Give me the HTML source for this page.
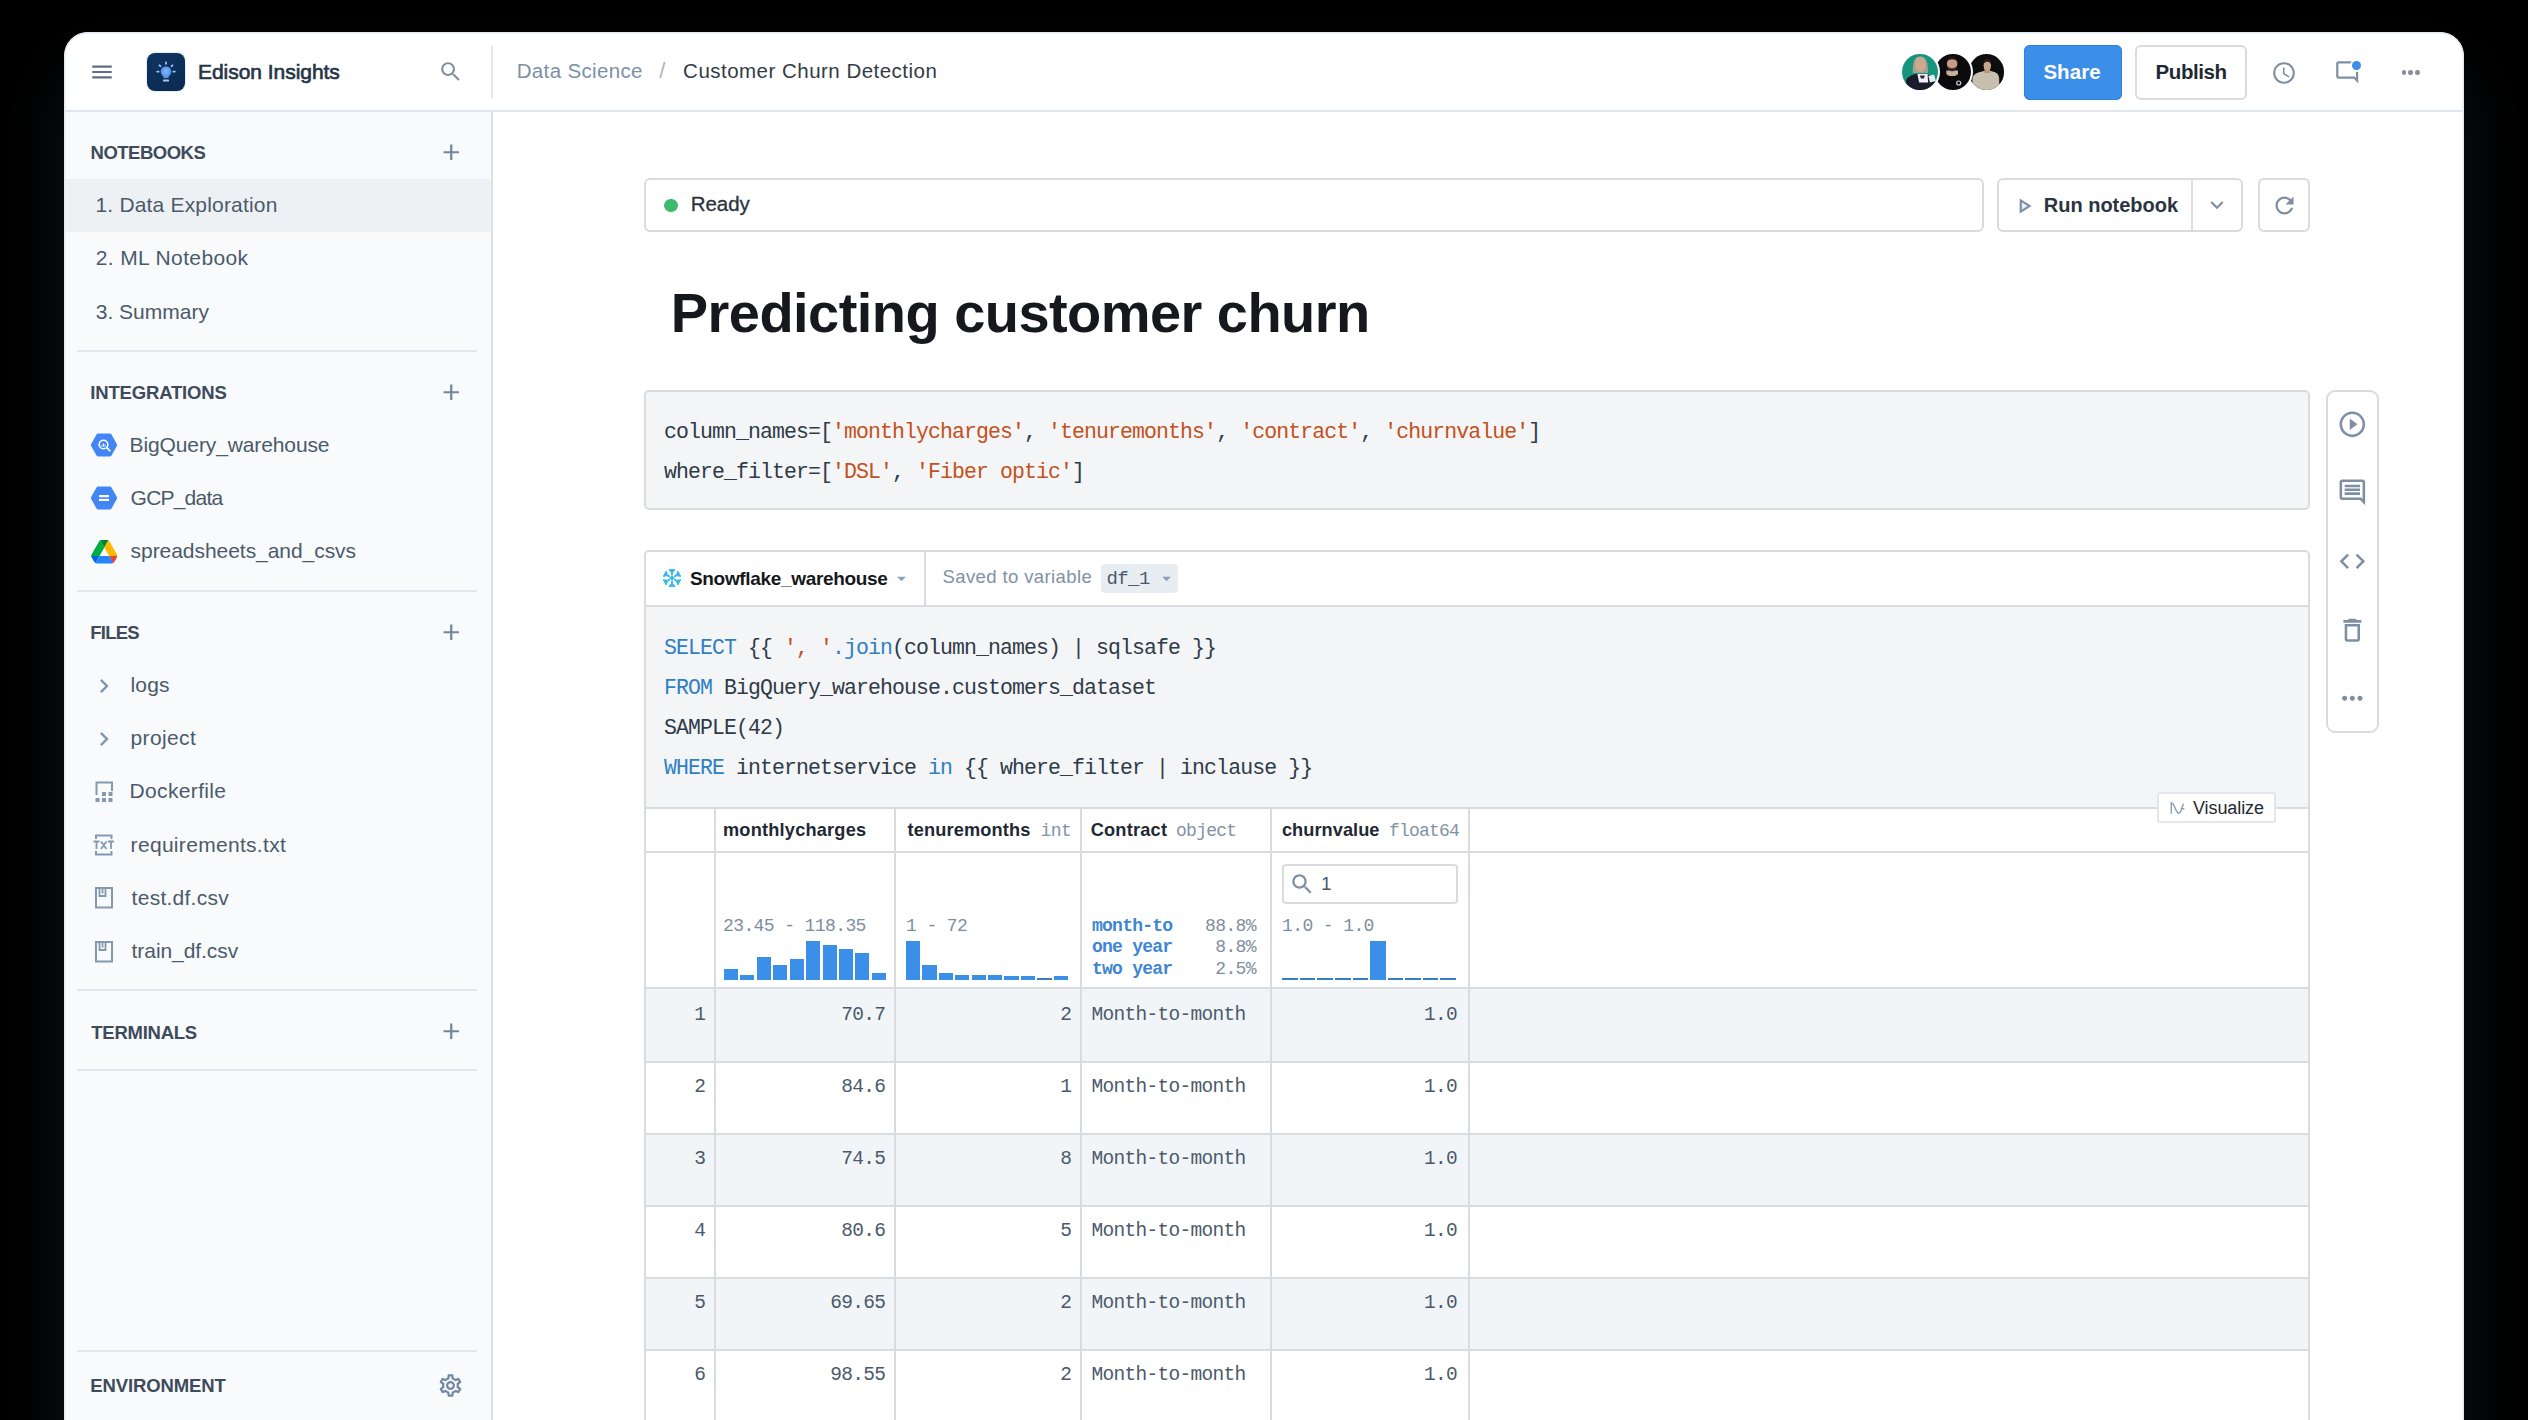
<!DOCTYPE html>
<html>
<head>
<meta charset="utf-8">
<style>
*{box-sizing:border-box;margin:0;padding:0}
html,body{width:2528px;height:1420px;overflow:hidden;background:#000;font-family:"Liberation Sans",sans-serif;}
body{position:relative;background:#000;}
.abs{position:absolute}
#win{position:absolute;left:64px;top:32px;width:2400px;height:1420px;background:#fff;border-radius:24px 24px 0 0;overflow:hidden;box-shadow:0 40px 70px 0px rgba(15,18,22,.95);}
/* everything inside #win positioned in page coords minus (64,32) via wrapper */
#pg{position:absolute;left:-64px;top:-32px;width:2528px;height:1452px;}
.t{position:absolute;white-space:nowrap;line-height:1;}
.hl{position:absolute;height:2px;background:#e3e7ec}
.vl{position:absolute;width:2px;background:#e3e7ec}
/* sidebar */
#side{position:absolute;left:64px;top:112px;width:428px;height:1340px;background:#f8fafc;}
.sh{font-size:18.5px;font-weight:bold;color:#3d4b5c;letter-spacing:.2px}
.si{font-size:21px;color:#4b5a6b;letter-spacing:.3px}
.plus{position:absolute;width:16px;height:16px}
.plus:before{content:"";position:absolute;left:7px;top:0;width:2px;height:16px;background:#6b83a0}
.plus:after{content:"";position:absolute;left:0;top:7px;width:16px;height:2px;background:#6b83a0}
.mono{font-family:"Liberation Mono",monospace}
.box{position:absolute;border:2px solid #d9dbdf;border-radius:6px;background:#fff}
.code{font-family:"Liberation Mono",monospace;font-size:21.5px;letter-spacing:-.9px;color:#2f3b48;position:absolute;white-space:pre;line-height:1}
.or{color:#c4501b}
.bl{color:#2f7fc4}
.cell{position:absolute;font-family:"Liberation Mono",monospace;font-size:19.5px;letter-spacing:-.7px;color:#4b5a6b;white-space:nowrap;line-height:1}
.th{position:absolute;font-size:19px;font-weight:bold;color:#1f2933;white-space:nowrap;line-height:1}
.ty{font-family:"Liberation Mono",monospace;font-weight:normal;-webkit-text-stroke:0;color:#8293a5;font-size:18px;letter-spacing:-.6px}
.bar{position:absolute;background:#3b8fe8}
</style>
</head>
<body>
<div id="win"><div id="pg">
<div class="abs" style="left:64px;top:32px;width:2400px;height:1420px;border-radius:24px 24px 0 0;box-shadow:0 0 0 1.500px #e4eaf2 inset;z-index:50;pointer-events:none"></div>

<!-- HEADER -->
<div class="hl" style="left:64px;top:110px;width:2400px;background:#e1e6ec"></div>
<div class="vl" style="left:491px;top:46px;height:52px;background:#e3e6ea"></div>
<!-- hamburger -->
<svg class="abs" style="left:88.80px;top:58.90px" width="26" height="26" viewBox="0 0 24 24"><path d="M3 18h18v-2H3v2zm0-5h18v-2H3v2zm0-7v2h18V6H3z" fill="#5f6d7e"/></svg>
<!-- logo -->
<div class="abs" id="logo" style="left:147px;top:53px;width:38px;height:38px;border-radius:8px;background:linear-gradient(160deg,#103562,#0a2a50);box-shadow:0 0 0 1px rgba(205,220,238,.55)">
<svg width="38" height="38" viewBox="0 0 38 38" style="position:absolute;left:0;top:0">
<path d="M19 13.600c-3.100 0-5.300 2.300-5.300 5 0 1.900 1 3.200 2.100 4.300.5.500.8 1 .8 1.600v.4h4.800v-.4c0-.6.300-1.100.8-1.600 1.100-1.100 2.100-2.400 2.100-4.300 0-2.700-2.200-5-5.300-5z" fill="#5c97ee"/>
<ellipse cx="19" cy="18.500" rx="2.800" ry="3.300" fill="#79abf8"/>
<rect x="16" y="26.600" width="6" height="1.900" rx=".6" fill="#a5c6fa"/>
<g stroke="#9dc1fa" stroke-width="1.900" stroke-linecap="round"><path d="M19 9.400v1.300M12.500 12.300l.9.900M25.500 12.300l-.9.900M10.200 18.600h1.400M26.400 18.600h1.400"/></g>
</svg></div>
<div class="t" id="brand" style="left:198.0px;top:61.2px;letter-spacing:-0.04px;font-size:21px;font-weight:normal;-webkit-text-stroke:.65px #263445;color:#263445">Edison Insights</div>
<!-- search -->
<svg class="abs" style="left:437.72px;top:58.82px" width="25.5" height="25.5" viewBox="0 0 24 24"><path d="M15.5 14h-.79l-.28-.27C15.41 12.59 16 11.11 16 9.5 16 5.91 13.09 3 9.5 3S3 5.910 3 9.5 5.910 16 9.5 16c1.610 0 3.090-.59 4.230-1.570l.27.28v.79l5 4.990L20.490 19l-4.990-5zm-6 0C7.010 14 5 11.990 5 9.5S7.010 5 9.5 5 14 7.010 14 9.5 11.990 14 9.5 14z" fill="#7f8fa3"/></svg>
<!-- breadcrumb -->
<div class="t" id="bc1" style="left:516.7px;top:60.8px;letter-spacing:0.35px;font-size:20.5px;color:#7c90a6">Data Science</div>
<div class="t" style="left:659.300px;top:59.500px;font-size:22px;color:#a9b6c4">/</div>
<div class="t" id="bc2" style="left:683.1px;top:60.8px;letter-spacing:0.48px;font-size:20.5px;color:#333b45">Customer Churn Detection</div>


<!-- avatars -->
<div class="abs" style="left:1968.6px;top:54.0px;width:35.8px;height:35.8px;border-radius:50%;background:#0d0d10;overflow:hidden;"><svg width="36" height="36" viewBox="1968.6 54.0 36 36" style="position:absolute;left:0;top:0"><path d="M1972 92V80c0-5 4-7.500 9-8.200l2.200-.9h7.400l2.200.9c4 .7 6 3.200 6 8.200v12z" fill="#c9bfae"/><rect x="1984" y="68" width="5.600" height="5" fill="#b8917a"/><ellipse cx="1986.900" cy="65.600" rx="3.700" ry="5.300" fill="#c9a48c"/><path d="M1983 64.500c0-4 1.500-5.800 3.900-5.800s3.900 1.800 3.900 5.800c-1-2-2-2.800-3.900-2.800s-2.900.8-3.900 2.800z" fill="#2a1d17"/></svg></div>
<div class="abs" style="left:1935.1px;top:54.0px;width:35.8px;height:35.8px;border-radius:50%;background:#0b0b0d;overflow:hidden;box-shadow:0 0 0 2px #fff;"><svg width="36" height="36" viewBox="1935.1 54.0 36 36" style="position:absolute;left:0;top:0"><path d="M1946.500 70.500h11.600v3c0 1.500-2.600 2.600-5.800 2.600s-5.800-1.100-5.800-2.600z" fill="#c7b29d"/><ellipse cx="1952.200" cy="63.800" rx="5.300" ry="6.900" fill="#c99a85"/><path d="M1947 65c.5 4 2.500 6.300 5.200 6.300s4.700-2.300 5.200-6.300c-1 2.300-3 3.200-5.200 3.200s-4.200-.9-5.200-3.200z" fill="#3b2a23"/><path d="M1946.600 62.500c0-4.200 2.400-6.500 5.600-6.500s5.600 2.300 5.600 6.500c-1.200-2.300-3-3.300-5.600-3.300s-4.400 1-5.600 3.300z" fill="#1d1512"/><circle cx="1958.800" cy="83" r="2" fill="none" stroke="#cfcfcf" stroke-width="1.200"/></svg></div>
<div class="abs" style="left:1902.1px;top:54.0px;width:35.8px;height:35.8px;border-radius:50%;background:#17947c;overflow:hidden;box-shadow:0 0 0 2px #fff;"><svg width="36" height="36" viewBox="1902.1 54.0 36 36" style="position:absolute;left:0;top:0"><path d="M1912.800 73c0-9 .5-16.500 7.600-16.500s7.600 7.500 7.600 16.500z" fill="#a9a08c"/><ellipse cx="1920.400" cy="65" rx="5.200" ry="7.200" fill="#cfa88f"/><path d="M1915.500 62c.4-3.600 2.200-5.200 4.900-5.200s4.500 1.600 4.900 5.200c-1.500-1.900-3-2.500-4.900-2.500s-3.400.6-4.900 2.500z" fill="#b5ad9a"/><path d="M1906 92V82c0-4.500 5-7 10-8h9c5 1 10 3.500 10 8v10z" fill="#1b1b2b"/><path d="M1917.500 74h10.200l.5 8.500h-9z" fill="#eef0f6"/><path d="M1928.500 76l5.500-1.500 2 6.500-6 1.500z" fill="#e4edf0"/><path d="M1920 75.500h5l-1 3h-3z" fill="#2a2540"/></svg></div>
<!-- share / publish -->
<div class="abs" style="left:2024px;top:45px;width:98px;height:55px;border-radius:6px;background:#3b8fe8;box-shadow:0 0 0 1px #2f82dc inset"></div>
<div class="t" id="share" style="left:2043.4px;top:61.5px;letter-spacing:0.05px;font-size:20.5px;font-weight:bold;color:#fff">Share</div>
<div class="box" style="left:2135px;top:45px;width:112px;height:55px;border-radius:6px"></div>
<div class="t" id="publish" style="left:2155.5px;top:61.5px;letter-spacing:-0.40px;font-size:20.5px;font-weight:bold;color:#1f2933">Publish</div>
<!-- clock -->
<svg class="abs" style="left:2271.00px;top:59.60px" width="26" height="26" viewBox="0 0 24 24"><path d="M11.990 2C6.470 2 2 6.480 2 12s4.470 10 9.990 10C17.520 22 22 17.520 22 12S17.520 2 11.990 2zM12 20c-4.420 0-8-3.580-8-8s3.580-8 8-8 8 3.580 8 8-3.580 8-8 8zm.5-13H11v6l5.250 3.150.75-1.230-4.500-2.670z" fill="#7f8fa3"/></svg>
<!-- comment w/ dot -->
<svg class="abs" style="left:2334.10px;top:59.00px" width="26.4" height="26.4" viewBox="0 0 24 24"><path d="M20 17.170L18.830 16H4V4h16v13.170zM20 2H4c-1.100 0-2 .9-2 2v12c0 1.100.9 2 2 2h14l4 4V4c0-1.100-.9-2-2-2z" fill="#7f8fa3"/></svg>
<div class="abs" style="left:2350px;top:58.800px;width:13px;height:13px;border-radius:50%;background:#fff"></div><div class="abs" style="left:2351.800px;top:60.600px;width:9.400px;height:9.400px;border-radius:50%;background:#3b8fe8"></div>
<!-- dots -->
<div class="abs" style="left:2401.600px;top:70.300px;width:4.600px;height:4.600px;border-radius:50%;background:#868f9b"></div>
<div class="abs" style="left:2408.300px;top:70.300px;width:4.600px;height:4.600px;border-radius:50%;background:#868f9b"></div>
<div class="abs" style="left:2415px;top:70.300px;width:4.600px;height:4.600px;border-radius:50%;background:#868f9b"></div>

<!-- SIDEBAR -->
<div id="side"></div>
<div class="vl" style="left:491px;top:112px;height:1340px;background:#dcdfe4"></div>

<div class="t sh" id="sh1" style="left:90.6px;top:143.6px;letter-spacing:-0.51px;">NOTEBOOKS</div><svg class="abs" style="left:437.55px;top:138.85px" width="26.5" height="26.5" viewBox="0 0 24 24"><path d="M19 13h-6v6h-2v-6H5v-2h6V5h2v6h6v2z" fill="#6f86a1"/></svg>
<div class="abs" style="left:64px;top:179px;width:427px;height:53px;background:#eef1f4"></div>
<div class="t si" id="nb1" style="left:95.5px;top:194.3px;letter-spacing:0.18px;">1. Data Exploration</div>
<div class="t si" id="nb2" style="left:95.7px;top:247.2px;letter-spacing:0.38px;">2. ML Notebook</div>
<div class="t si" id="nb3" style="left:95.7px;top:300.5px;letter-spacing:0.02px;">3. Summary</div>
<div class="hl" style="left:77px;top:350px;width:400px"></div>

<div class="t sh" id="sh2" style="left:90.3px;top:383.8px;letter-spacing:-0.17px;">INTEGRATIONS</div><svg class="abs" style="left:437.55px;top:378.85px" width="26.5" height="26.5" viewBox="0 0 24 24"><path d="M19 13h-6v6h-2v-6H5v-2h6V5h2v6h6v2z" fill="#6f86a1"/></svg>
<svg class="abs" style="left:90px;top:432px" width="28" height="26" viewBox="0 0 28 26"><path d="M8.200 1.500h11.600a2 2 0 0 1 1.700 1l5.300 9.500a2 2 0 0 1 0 2l-5.300 9.500a2 2 0 0 1-1.700 1H8.200a2 2 0 0 1-1.700-1L1.200 14a2 2 0 0 1 0-2l5.300-9.500a2 2 0 0 1 1.700-1z" fill="#4285f4"/><circle cx="13.500" cy="12.500" r="4.300" fill="none" stroke="#fff" stroke-width="1.600"/><path d="M16.700 15.700l3 3" stroke="#fff" stroke-width="1.800" stroke-linecap="round"/><path d="M12 13v1.500M13.500 11.500v3M15 12.500v2" stroke="#fff" stroke-width="1"/></svg>
<div class="t si" id="in1" style="left:129.6px;top:433.6px;letter-spacing:-0.12px;">BigQuery_warehouse</div>
<svg class="abs" style="left:90px;top:485px" width="28" height="26" viewBox="0 0 28 26"><path d="M8.200 1.500h11.600a2 2 0 0 1 1.700 1l5.300 9.500a2 2 0 0 1 0 2l-5.300 9.500a2 2 0 0 1-1.700 1H8.200a2 2 0 0 1-1.700-1L1.200 14a2 2 0 0 1 0-2l5.300-9.500a2 2 0 0 1 1.700-1z" fill="#4285f4"/><rect x="9" y="10" width="10" height="2.200" fill="#fff"/><rect x="9" y="13.800" width="10" height="2.200" fill="#fff"/></svg>
<div class="t si" id="in2" style="left:130.6px;top:486.8px;letter-spacing:-0.79px;">GCP_data</div>
<svg class="abs" style="left:90.600px;top:540.200px" width="26.600" height="23.400" viewBox="0 0 87.300 78"><path d="M6.600 66.850l3.850 6.650c.8 1.400 1.950 2.500 3.300 3.300l13.750-23.800H0c0 1.550.4 3.100 1.200 4.500z" fill="#0066da"/><path d="M43.650 25L29.900 1.200c-1.350.8-2.500 1.900-3.300 3.300l-25.400 44A9.060 9.060 0 0 0 0 53h27.500z" fill="#00ac47"/><path d="M73.550 76.800c1.350-.8 2.500-1.900 3.300-3.300l1.600-2.750 7.650-13.250c.8-1.400 1.200-2.950 1.200-4.500H59.798l5.852 11.500z" fill="#ea4335"/><path d="M43.650 25L57.400 1.200C56.050.4 54.500 0 52.900 0H34.400c-1.600 0-3.150.45-4.500 1.200z" fill="#00832d"/><path d="M59.800 53H27.500L13.750 76.800c1.350.8 2.900 1.200 4.500 1.200h50.800c1.600 0 3.150-.45 4.500-1.200z" fill="#2684fc"/><path d="M73.400 26.500l-12.700-22c-.8-1.400-1.950-2.500-3.300-3.300L43.650 25 59.800 53h27.450c0-1.550-.4-3.100-1.200-4.500z" fill="#ffba00"/></svg>
<div class="t si" id="in3" style="left:130.6px;top:540.0px;letter-spacing:-0.05px;">spreadsheets_and_csvs</div>
<div class="hl" style="left:77px;top:590px;width:400px"></div>

<div class="t sh" id="sh3" style="left:90.3px;top:623.7px;letter-spacing:-0.78px;">FILES</div><svg class="abs" style="left:437.55px;top:618.85px" width="26.5" height="26.5" viewBox="0 0 24 24"><path d="M19 13h-6v6h-2v-6H5v-2h6V5h2v6h6v2z" fill="#6f86a1"/></svg>
<svg class="abs" style="left:89.95px;top:671.50px" width="28" height="28" viewBox="0 0 24 24"><path d="M10 6L8.590 7.410 13.170 12l-4.580 4.590L10 18l6-6z" fill="#8096ad"/></svg>
<div class="t si" id="f1" style="left:130.6px;top:674.0px;letter-spacing:0.10px;">logs</div>
<svg class="abs" style="left:89.95px;top:724.60px" width="28" height="28" viewBox="0 0 24 24"><path d="M10 6L8.590 7.410 13.170 12l-4.580 4.590L10 18l6-6z" fill="#8096ad"/></svg>
<div class="t si" id="f2" style="left:130.6px;top:727.0px;letter-spacing:0.35px;">project</div>
<svg class="abs" style="left:93px;top:779px" width="24" height="26" viewBox="0 0 24 26"><path d="M3.500 16V3.500h15.500V12" fill="none" stroke="#8499b0" stroke-width="2"/><rect x="2.500" y="19" width="4" height="4" fill="#8499b0"/><rect x="9" y="19" width="4" height="4" fill="#8499b0"/><rect x="15.500" y="19" width="4" height="4" fill="#8499b0"/><rect x="9" y="13" width="4" height="4" fill="#8499b0"/><rect x="15.500" y="13" width="4" height="4" fill="#8499b0"/></svg>
<div class="t si" id="f3" style="left:129.6px;top:780.3px;letter-spacing:0.34px;">Dockerfile</div>
<svg class="abs" style="left:92.200px;top:832px" width="26" height="26" viewBox="0 0 26 26"><path d="M4 7V3.500h15.500V7M4 19v3.500h15.500V19" fill="none" stroke="#8499b0" stroke-width="2"/><path d="M1.500 9.500h6M4.500 9.500v7.500M9 9.500l5.500 7.500M14.500 9.500L9 17M16 9.500h6M19 9.500v7.500" fill="none" stroke="#8499b0" stroke-width="1.800"/></svg>
<div class="t si" id="f4" style="left:130.6px;top:833.6px;letter-spacing:0.31px;">requirements.txt</div>
<svg class="abs" style="left:93px;top:885px" width="24" height="26" viewBox="0 0 24 26"><rect x="3" y="3" width="16" height="19.500" fill="none" stroke="#8499b0" stroke-width="2"/><path d="M6.500 3.500v7.500h6V3.500M9.500 3.500v5" fill="none" stroke="#8499b0" stroke-width="1.800"/></svg>
<div class="t si" id="f5" style="left:131.6px;top:886.8px;letter-spacing:0.26px;">test.df.csv</div>
<svg class="abs" style="left:93px;top:938.500px" width="24" height="26" viewBox="0 0 24 26"><rect x="3" y="3" width="16" height="19.500" fill="none" stroke="#8499b0" stroke-width="2"/><path d="M6.500 3.500v7.500h6V3.500M9.500 3.500v5" fill="none" stroke="#8499b0" stroke-width="1.800"/></svg>
<div class="t si" id="f6" style="left:131.6px;top:940.0px;letter-spacing:-0.07px;">train_df.csv</div>
<div class="hl" style="left:77px;top:989px;width:400px"></div>

<div class="t sh" id="sh4" style="left:91.3px;top:1023.7px;letter-spacing:-0.25px;">TERMINALS</div><svg class="abs" style="left:437.55px;top:1017.85px" width="26.5" height="26.5" viewBox="0 0 24 24"><path d="M19 13h-6v6h-2v-6H5v-2h6V5h2v6h6v2z" fill="#6f86a1"/></svg>
<div class="hl" style="left:77px;top:1069px;width:400px"></div>
<div class="hl" style="left:77px;top:1350px;width:400px"></div>
<div class="t sh" id="sh5" style="left:90.3px;top:1377.4px;letter-spacing:-0.13px;">ENVIRONMENT</div>
<svg class="abs" style="left:437.20px;top:1371.80px" width="27" height="27" viewBox="0 0 24 24"><path d="M19.430 12.980c.04-.32.07-.64.07-.98 0-.34-.03-.66-.07-.98l2.110-1.650c.19-.15.24-.42.12-.64l-2-3.460c-.09-.16-.26-.25-.44-.25-.06 0-.12.010-.17.030l-2.490 1c-.52-.4-1.080-.73-1.690-.98l-.38-2.650C14.460 2.180 14.250 2 14 2h-4c-.25 0-.46.18-.49.42l-.38 2.650c-.61.25-1.170.59-1.690.98l-2.490-1c-.06-.02-.12-.03-.18-.03-.17 0-.34.09-.43.25l-2 3.460c-.13.22-.07.49.12.64l2.110 1.650c-.04.32-.07.65-.07.98 0 .33.03.66.07.98l-2.110 1.650c-.19.15-.24.42-.12.64l2 3.460c.09.16.26.25.44.25.06 0 .12-.010.17-.03l2.490-1c.52.4 1.080.73 1.690.98l.38 2.650c.03.24.24.42.49.42h4c.25 0 .46-.18.49-.42l.38-2.650c.61-.25 1.170-.59 1.690-.98l2.490 1c.06.02.12.03.18.03.17 0 .34-.09.43-.25l2-3.460c.12-.22.07-.49-.12-.64l-2.110-1.650zm-1.980-1.710c.04.31.05.52.05.73 0 .21-.02.43-.05.73l-.14 1.130.89.7 1.080.84-.7 1.210-1.270-.51-1.040-.42-.9.68c-.43.32-.84.56-1.250.73l-1.060.43-.16 1.130-.2 1.350h-1.400l-.19-1.350-.16-1.130-1.060-.43c-.43-.18-.83-.41-1.230-.71l-.91-.7-1.060.43-1.270.51-.7-1.210 1.080-.84.89-.7-.14-1.130c-.03-.31-.05-.54-.05-.74s.02-.43.05-.73l.14-1.130-.89-.7-1.080-.84.7-1.210 1.270.51 1.040.42.9-.68c.43-.32.84-.56 1.250-.73l1.060-.43.16-1.130.2-1.350h1.390l.19 1.350.16 1.130 1.060.43c.43.18.83.41 1.230.71l.91.7 1.060-.43 1.270-.51.7 1.210-1.070.85-.89.7.14 1.130zM12 8c-2.210 0-4 1.790-4 4s1.790 4 4 4 4-1.790 4-4-1.790-4-4-4zm0 6c-1.100 0-2-.9-2-2s.9-2 2-2 2 .9 2 2-.9 2-2 2z" fill="#7389a3"/></svg>



<!-- status bar -->
<div class="box" style="left:644px;top:178px;width:1340px;height:54px"></div>
<div class="abs" style="left:664px;top:198.700px;width:13.500px;height:13.500px;border-radius:50%;background:#3dbb6d"></div>
<div class="t" id="ready" style="left:690.7px;top:194.2px;letter-spacing:-0.05px;font-size:20.5px;color:#2b3440;-webkit-text-stroke:.3px #2b3440">Ready</div>
<div class="box" style="left:1997px;top:178px;width:246px;height:54px"></div>
<div class="vl" style="left:2190.5px;top:180px;height:50px;background:#dce0e5"></div>
<svg class="abs" style="left:2010.88px;top:193.00px" width="26" height="26" viewBox="0 0 24 24"><path d="M9 6.800v10.400l8.200-5.200z" fill="#e4f3fb"/><path d="M10 8.640L15.270 12 10 15.360V8.640M8 5v14l11-7L8 5z" fill="#7f8fa3"/></svg>
<div class="t" id="runnb" style="left:2043.8px;top:194.5px;letter-spacing:-0.01px;font-size:20px;font-weight:bold;color:#2b3440">Run notebook</div>
<svg class="abs" style="left:2204.30px;top:192.48px" width="26" height="26" viewBox="0 0 24 24"><path d="M16.590 8.590L12 13.170 7.410 8.590 6 10l6 6 6-6z" fill="#7f8fa3"/></svg>
<div class="box" style="left:2258px;top:178px;width:52px;height:54px"></div>
<svg class="abs" style="left:2270.50px;top:192.00px" width="27" height="27" viewBox="0 0 24 24"><path d="M17.650 6.350C16.200 4.900 14.210 4 12 4c-4.420 0-7.990 3.580-7.990 8s3.570 8 7.990 8c3.730 0 6.840-2.550 7.730-6h-2.080c-.82 2.330-3.040 4-5.650 4-3.310 0-6-2.690-6-6s2.690-6 6-6c1.660 0 3.140.69 4.220 1.780L13 11h7V4l-2.350 2.350z" fill="#7f8fa3"/></svg>
<!-- title -->
<div class="t" id="title" style="left:670.8px;top:284.9px;letter-spacing:-0.55px;font-size:56px;font-weight:bold;color:#15181c">Predicting customer churn</div>

<!-- code cell 1 -->
<div class="box" style="left:644px;top:390px;width:1666px;height:120px;background:#f3f5f7;border-color:#d9dbdf;border-radius:5px"></div>
<div class="code" id="c1" style="left:664px;top:421.9px;letter-spacing:-.9px;">column_names=[<span class="or">'monthlycharges'</span>, <span class="or">'tenuremonths'</span>, <span class="or">'contract'</span>, <span class="or">'churnvalue'</span>]</div>
<div class="code" id="c2" style="left:664px;top:462.3px;letter-spacing:-.9px;">where_filter=[<span class="or">'DSL'</span>, <span class="or">'Fiber optic'</span>]</div>

<div class="box" style="left:2326px;top:390px;width:53px;height:343px;border-radius:9px"></div>
<svg class="abs" style="left:2337.35px;top:408.65px" width="30.7" height="30.7" viewBox="0 0 24 24"><path d="M10 16.5l6-4.5-6-4.5v9zM12 2C6.480 2 2 6.480 2 12s4.480 10 10 10 10-4.480 10-10S17.520 2 12 2zm0 18c-4.410 0-8-3.590-8-8s3.590-8 8-8 8 3.590 8 8-3.590 8-8 8z" fill="#7f8fa3"/></svg>
<svg class="abs" style="left:2337.35px;top:476.85px" width="30.7" height="30.7" viewBox="0 0 24 24"><path d="M21.990 4c0-1.100-.89-2-1.990-2H4c-1.100 0-2 .9-2 2v12c0 1.100.9 2 2 2h14l4 4-.010-18zM20 4v13.170L18.830 16H4V4h16zM6 12h12v2H6zm0-3h12v2H6zm0-3h12v2H6z" fill="#7f8fa3"/></svg>
<svg class="abs" style="left:2337.35px;top:546.05px" width="30.7" height="30.7" viewBox="0 0 24 24"><path d="M9.400 16.600L4.800 12l4.600-4.600L8 6l-6 6 6 6 1.400-1.400zm5.200 0l4.600-4.600-4.600-4.600L16 6l6 6-6 6-1.400-1.400z" fill="#7f8fa3"/></svg>
<svg class="abs" style="left:2337.35px;top:614.65px" width="30.7" height="30.7" viewBox="0 0 24 24"><path d="M6 19c0 1.100.9 2 2 2h8c1.100 0 2-.9 2-2V7H6v12zM8 9h8v10H8V9zm7.500-5l-1-1h-5l-1 1H5v2h14V4h-3.500z" fill="#7f8fa3"/></svg>
<svg class="abs" style="left:2337.35px;top:683.25px" width="30.7" height="30.7" viewBox="0 0 24 24"><path d="M6 10c-1.100 0-2 .9-2 2s.9 2 2 2 2-.9 2-2-.9-2-2-2zm12 0c-1.100 0-2 .9-2 2s.9 2 2 2 2-.9 2-2-.9-2-2-2zm-6 0c-1.100 0-2 .9-2 2s.9 2 2 2 2-.9 2-2-.9-2-2-2z" fill="#7f8fa3"/></svg>

<div class="box" style="left:644px;top:550px;width:1666px;height:920px;border-color:#d9dbdf;border-radius:5px 5px 0 0"></div>
<div class="abs" style="left:646px;top:607px;width:1662px;height:201px;background:#f3f5f7"></div>
<div class="hl" style="left:646px;top:605px;width:1662px;background:#d9dbdf"></div>
<div class="vl" style="left:924px;top:552px;height:53px;background:#d9dbdf"></div>
<!-- snowflake -->
<svg class="abs" id="snow" style="left:663.100px;top:569px" width="18" height="18" viewBox="-9 -9 18 18"><g stroke="#33b9e9" stroke-width="1.950" stroke-linecap="round" stroke-linejoin="round" fill="none"><g transform="rotate(0)"><path d="M0 -3.600V-8.200M-2.300 -8.200L0 -5.900L2.300 -8.200"/></g><g transform="rotate(60)"><path d="M0 -3.600V-8.200M-2.300 -8.200L0 -5.900L2.300 -8.200"/></g><g transform="rotate(120)"><path d="M0 -3.600V-8.200M-2.300 -8.200L0 -5.900L2.300 -8.200"/></g><g transform="rotate(180)"><path d="M0 -3.600V-8.200M-2.300 -8.200L0 -5.900L2.300 -8.200"/></g><g transform="rotate(240)"><path d="M0 -3.600V-8.200M-2.300 -8.200L0 -5.900L2.300 -8.200"/></g><g transform="rotate(300)"><path d="M0 -3.600V-8.200M-2.300 -8.200L0 -5.900L2.300 -8.200"/></g></g><rect x="-1.500" y="-1.500" width="3" height="3" transform="rotate(45)" fill="#33b9e9" stroke="#33b9e9" stroke-width="1"/></svg>
<div class="t" id="sfw" style="left:690.0px;top:568.7px;letter-spacing:-0.33px;font-size:19px;font-weight:bold;color:#15181c">Snowflake_warehouse</div>
<svg class="abs" style="left:890.50px;top:568.06px" width="21" height="21" viewBox="0 0 24 24"><path d="M7 10l5 5 5-5z" fill="#8ea1b5"/></svg>
<div class="t" id="stv" style="left:942.5px;top:568.0px;letter-spacing:0.39px;font-size:18.5px;color:#8091a3">Saved to variable</div>
<div class="abs" style="left:1101px;top:564px;width:77px;height:29px;border-radius:4px;background:#e8edf2"></div>
<div class="t mono" style="left:1106.500px;top:570.300px;font-size:19px;letter-spacing:-.6px;color:#4b5a6b">df_1</div>
<svg class="abs" style="left:1155.70px;top:568.06px" width="21" height="21" viewBox="0 0 24 24"><path d="M7 10l5 5 5-5z" fill="#8ea1b5"/></svg>

<div class="code" id="q1" style="left:664px;top:638.3px;letter-spacing:-.9px;"><span class="bl">SELECT</span> {{ <span class="or">', '</span><span class="bl">.join</span>(column_names) | sqlsafe }}</div>
<div class="code" id="q2" style="left:664px;top:678.3px;letter-spacing:-.9px;"><span class="bl">FROM</span> BigQuery_warehouse.customers_dataset</div>
<div class="code" id="q3" style="left:664px;top:718.3px;letter-spacing:-.9px;">SAMPLE(42)</div>
<div class="code" id="q4" style="left:664px;top:758.3px;letter-spacing:-.9px;"><span class="bl">WHERE</span> internetservice <span class="bl">in</span> {{ where_filter | inclause }}</div>

<!-- table -->
<div class="abs" style="left:646px;top:808px;width:1662px;height:180px;background:#fff"></div>
<div class="hl" style="left:646px;top:807px;width:1662px;background:#d9dbdf"></div>
<div class="hl" style="left:646px;top:851px;width:1662px;background:#d9dbdf"></div>
<div class="th" id="th1" style="left:723.0px;top:820.6px;letter-spacing:0.20px;font-size:18.2px">monthlycharges</div>
<div class="th" id="th2" style="left:907.6px;top:820.6px;letter-spacing:0.14px;font-size:18.2px">tenuremonths</div>
<div class="th ty" id="ty2" style="left:1040.5px;top:822.3px;letter-spacing:-0.60px;">int</div>
<div class="th" id="th3" style="left:1090.7px;top:820.6px;letter-spacing:0.21px;font-size:18.2px">Contract</div>
<div class="th ty" id="ty3" style="left:1176.1px;top:822.3px;letter-spacing:-0.78px;">object</div>
<div class="th" id="th4" style="left:1281.9px;top:820.6px;letter-spacing:0.06px;font-size:18.2px">churnvalue</div>
<div class="th ty" id="ty4" style="left:1389.0px;top:822.3px;letter-spacing:-0.82px;">float64</div>
<!-- stats -->
<div class="cell" style="left:723px;top:916.700px;font-size:18px;letter-spacing:-.6px;color:#7d8ea1">23.45 - 118.35</div>
<div class="cell" style="left:906px;top:916.700px;font-size:18px;letter-spacing:-.6px;color:#7d8ea1">1 - 72</div>
<div class="cell" style="left:1282px;top:916.700px;font-size:18px;letter-spacing:-.6px;color:#7d8ea1">1.0 - 1.0</div>
<div class="cell" style="left:1092px;top:916.700px;font-size:18px;letter-spacing:-.75px;color:#3e86d3;font-weight:bold">month-to</div>
<div class="cell" style="left:1092px;top:938.200px;font-size:18px;letter-spacing:-.75px;color:#3e86d3;font-weight:bold">one year</div>
<div class="cell" style="left:1092px;top:959.800px;font-size:18px;letter-spacing:-.75px;color:#3e86d3;font-weight:bold">two year</div>
<div class="cell" style="right:1272px;top:916.700px;font-size:18px;letter-spacing:-.6px;color:#7d8ea1">88.8%</div>
<div class="cell" style="right:1272px;top:938.200px;font-size:18px;letter-spacing:-.6px;color:#7d8ea1">8.8%</div>
<div class="cell" style="right:1272px;top:959.800px;font-size:18px;letter-spacing:-.6px;color:#7d8ea1">2.5%</div>

<div class="bar" style="left:724.00px;top:968.90px;width:14px;height:11.4px"></div><div class="bar" style="left:740.43px;top:974.90px;width:14px;height:5.4px"></div><div class="bar" style="left:756.86px;top:956.80px;width:14px;height:23.5px"></div><div class="bar" style="left:773.29px;top:965.00px;width:14px;height:15.3px"></div><div class="bar" style="left:789.72px;top:958.90px;width:14px;height:21.4px"></div><div class="bar" style="left:806.15px;top:941.10px;width:14px;height:39.2px"></div><div class="bar" style="left:822.58px;top:944.70px;width:14px;height:35.6px"></div><div class="bar" style="left:839.01px;top:949.00px;width:14px;height:31.3px"></div><div class="bar" style="left:855.44px;top:952.90px;width:14px;height:27.4px"></div><div class="bar" style="left:871.87px;top:973.20px;width:14px;height:7.1px"></div>
<div class="bar" style="left:905.90px;top:941.10px;width:14.3px;height:39.2px"></div><div class="bar" style="left:922.32px;top:965.00px;width:14.3px;height:15.3px"></div><div class="bar" style="left:938.74px;top:973.20px;width:14.3px;height:7.1px"></div><div class="bar" style="left:955.16px;top:974.90px;width:14.3px;height:5.4px"></div><div class="bar" style="left:971.58px;top:974.90px;width:14.3px;height:5.4px"></div><div class="bar" style="left:988.00px;top:974.90px;width:14.3px;height:5.4px"></div><div class="bar" style="left:1004.42px;top:976.30px;width:14.3px;height:4px"></div><div class="bar" style="left:1020.84px;top:976.30px;width:14.3px;height:4px"></div><div class="bar" style="left:1037.26px;top:977.90px;width:14.3px;height:2.4px;background:#3a7cc8"></div><div class="bar" style="left:1053.68px;top:976.30px;width:14.3px;height:4px"></div>
<div class="bar" style="left:1282.20px;top:978.00px;width:15.6px;height:2.3px;background:#3a7cc8"></div><div class="bar" style="left:1299.78px;top:978.00px;width:15.6px;height:2.3px;background:#3a7cc8"></div><div class="bar" style="left:1317.36px;top:978.00px;width:15.6px;height:2.3px;background:#3a7cc8"></div><div class="bar" style="left:1334.94px;top:978.00px;width:15.6px;height:2.3px;background:#3a7cc8"></div><div class="bar" style="left:1352.52px;top:978.00px;width:15.6px;height:2.3px;background:#3a7cc8"></div><div class="bar" style="left:1370.10px;top:941.10px;width:15.6px;height:39.2px"></div><div class="bar" style="left:1387.68px;top:978.00px;width:15.6px;height:2.3px;background:#3a7cc8"></div><div class="bar" style="left:1405.26px;top:978.00px;width:15.6px;height:2.3px;background:#3a7cc8"></div><div class="bar" style="left:1422.84px;top:978.00px;width:15.6px;height:2.3px;background:#3a7cc8"></div><div class="bar" style="left:1440.42px;top:978.00px;width:15.6px;height:2.3px;background:#3a7cc8"></div>
<!-- search input -->
<div class="box" style="left:1282px;top:864px;width:176px;height:40px;border-radius:4px"></div>
<svg class="abs" style="left:1288.73px;top:871.03px" width="26.5" height="26.5" viewBox="0 0 24 24"><path d="M15.5 14h-.79l-.28-.27C15.41 12.59 16 11.11 16 9.5 16 5.91 13.09 3 9.5 3S3 5.910 3 9.5 5.910 16 9.5 16c1.610 0 3.090-.59 4.230-1.570l.27.28v.79l5 4.990L20.490 19l-4.990-5zm-6 0C7.010 14 5 11.990 5 9.5S7.010 5 9.5 5 14 7.010 14 9.5 11.990 14 9.5 14z" fill="#7f8fa3"/></svg>
<div class="t" style="left:1321px;top:874px;font-size:19px;color:#4b5a6b">1</div>
<div class="hl" style="left:646px;top:987px;width:1662px;background:#d9dbdf"></div>
<div class="abs" style="left:646px;top:989px;width:1662px;height:72px;background:#f2f5f8"></div>
<div class="cell" style="right:1822.7px;top:1006.4px">1</div><div class="cell" style="right:1642.7px;top:1006.4px">70.7</div><div class="cell" style="right:1456.7px;top:1006.4px">2</div><div class="cell" style="left:1091.5px;top:1006.4px">Month-to-month</div><div class="cell" style="right:1071px;top:1006.4px">1.0</div>
<div class="hl" style="left:646px;top:1061px;width:1662px;background:#d9dbdf"></div>
<div class="cell" style="right:1822.7px;top:1078.3px">2</div><div class="cell" style="right:1642.7px;top:1078.3px">84.6</div><div class="cell" style="right:1456.7px;top:1078.3px">1</div><div class="cell" style="left:1091.5px;top:1078.3px">Month-to-month</div><div class="cell" style="right:1071px;top:1078.3px">1.0</div>
<div class="hl" style="left:646px;top:1133px;width:1662px;background:#d9dbdf"></div>
<div class="abs" style="left:646px;top:1135px;width:1662px;height:70px;background:#f2f5f8"></div>
<div class="cell" style="right:1822.7px;top:1150.2px">3</div><div class="cell" style="right:1642.7px;top:1150.2px">74.5</div><div class="cell" style="right:1456.7px;top:1150.2px">8</div><div class="cell" style="left:1091.5px;top:1150.2px">Month-to-month</div><div class="cell" style="right:1071px;top:1150.2px">1.0</div>
<div class="hl" style="left:646px;top:1205px;width:1662px;background:#d9dbdf"></div>
<div class="cell" style="right:1822.7px;top:1222.2px">4</div><div class="cell" style="right:1642.7px;top:1222.2px">80.6</div><div class="cell" style="right:1456.7px;top:1222.2px">5</div><div class="cell" style="left:1091.5px;top:1222.2px">Month-to-month</div><div class="cell" style="right:1071px;top:1222.2px">1.0</div>
<div class="hl" style="left:646px;top:1277px;width:1662px;background:#d9dbdf"></div>
<div class="abs" style="left:646px;top:1279px;width:1662px;height:70px;background:#f2f5f8"></div>
<div class="cell" style="right:1822.7px;top:1294.2px">5</div><div class="cell" style="right:1642.7px;top:1294.2px">69.65</div><div class="cell" style="right:1456.7px;top:1294.2px">2</div><div class="cell" style="left:1091.5px;top:1294.2px">Month-to-month</div><div class="cell" style="right:1071px;top:1294.2px">1.0</div>
<div class="hl" style="left:646px;top:1349px;width:1662px;background:#d9dbdf"></div>
<div class="cell" style="right:1822.7px;top:1366.0px">6</div><div class="cell" style="right:1642.7px;top:1366.0px">98.55</div><div class="cell" style="right:1456.7px;top:1366.0px">2</div><div class="cell" style="left:1091.5px;top:1366.0px">Month-to-month</div><div class="cell" style="right:1071px;top:1366.0px">1.0</div>
<!-- col borders -->
<div class="vl" style="left:714px;top:808px;height:640px;background:#d9dbdf"></div>
<div class="vl" style="left:894px;top:808px;height:640px;background:#d9dbdf"></div>
<div class="vl" style="left:1080px;top:808px;height:640px;background:#d9dbdf"></div>
<div class="vl" style="left:1270px;top:808px;height:640px;background:#d9dbdf"></div>
<div class="vl" style="left:1468px;top:808px;height:640px;background:#d9dbdf"></div>
<!-- visualize -->
<div class="box" style="left:2157px;top:792px;width:119px;height:31px;border-radius:3px;border-color:#e3e7ec"></div>
<svg class="abs" style="left:2168px;top:799px" width="18" height="18" viewBox="0 0 18 18"><path d="M3.300 3V14.700M4.200 4.100C6.500 6 8.500 14.400 10.800 14.400S14 6 15.800 4.700M12.800 9.700h3.500" fill="none" stroke="#8a9bab" stroke-width="1.350"/></svg>
<div class="t" id="viz" style="left:2193.0px;top:798.5px;letter-spacing:-0.09px;font-size:18px;color:#1f2933">Visualize</div>



</div></div>
</body>
</html>
